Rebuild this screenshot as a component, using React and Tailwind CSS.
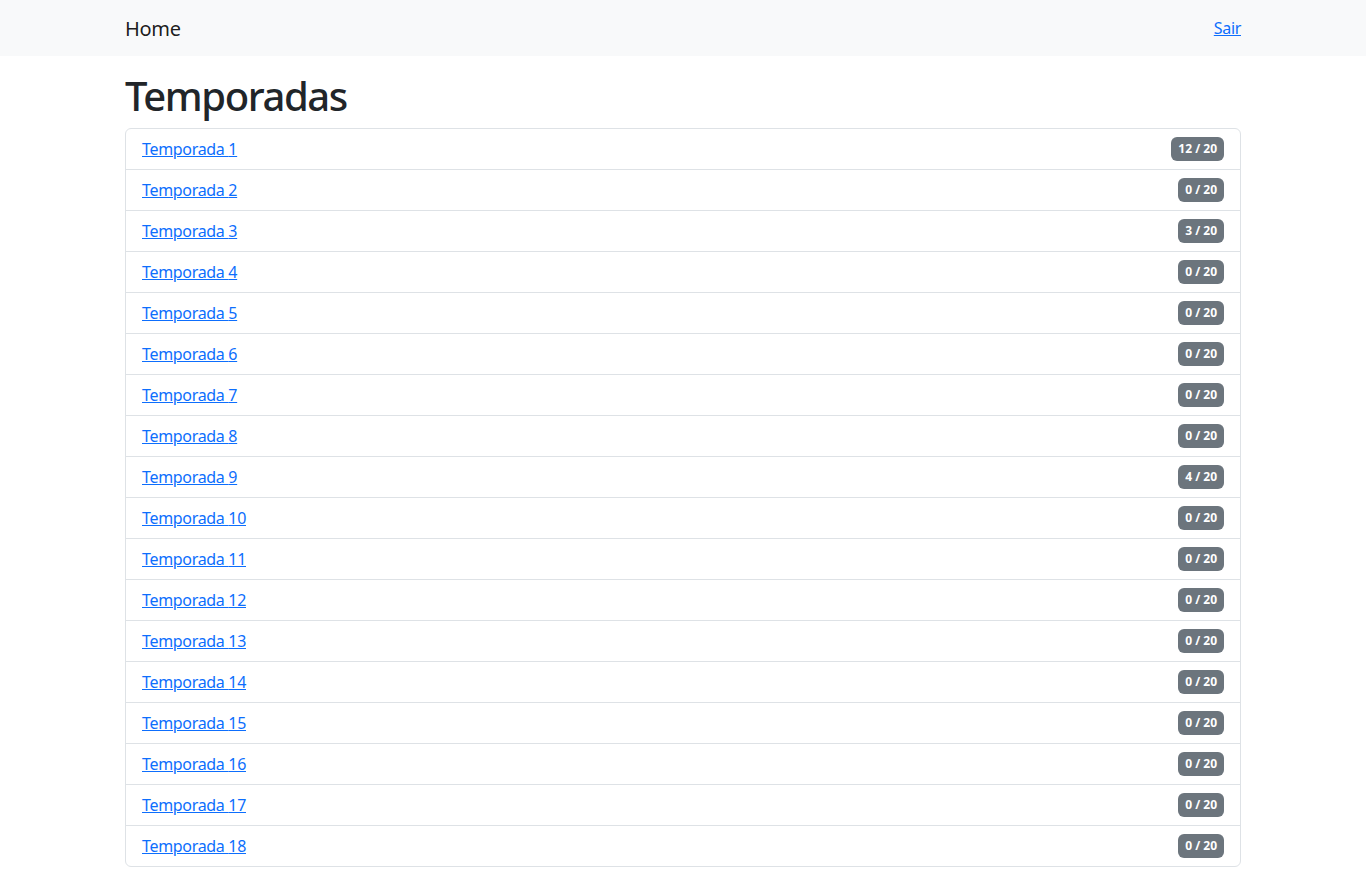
const seasons = [12, 0, 3, 0, 0, 0, 0, 0, 4, 0, 0, 0, 0, 0, 0, 0, 0, 0]

export default function App() {
  return (
    <div className="min-h-screen bg-white text-[#212529] tracking-[-0.02em]" style={{ fontFamily: '"Noto Sans", sans-serif' }}>
      <nav className="bg-[#f8f9fa] h-14">
        <div className="mx-auto max-w-[1140px] px-3 h-full flex items-center justify-between">
          <a href="#" className="text-xl text-black/90 leading-[30px] pt-[2px]">Home</a>
          <a href="#" className="text-base text-[#0d6efd] underline">Sair</a>
        </div>
      </nav>
      <main className="mx-auto max-w-[1140px] px-3 pt-4">
        <h1 className="text-[40px] leading-[48px] font-medium mb-2 tracking-[-0.035em]">Temporadas</h1>
        <ul className="border border-[#dee2e6] rounded-md">
          {seasons.map((done, i) => (
            <li
              key={i}
              className="flex items-center justify-between px-4 h-[41px] border-b border-[#dee2e6] last:border-b-0 last:h-10"
            >
              <a href="#" className="text-base text-[#0d6efd] underline">Temporada {i + 1}</a>
              <span className="h-6 px-[7px] rounded-md bg-[#6c757d] text-white text-xs font-bold flex items-center tracking-normal">
                {done} / 20
              </span>
            </li>
          ))}
        </ul>
      </main>
    </div>
  )
}
